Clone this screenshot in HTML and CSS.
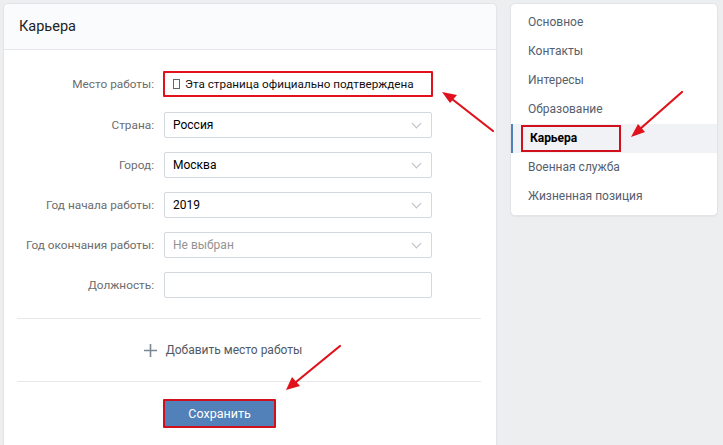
FILE: index.html
```html
<!doctype html>
<html>
  <head>
    <meta charset="utf-8">
    <title>Карьера</title>
    <link rel="stylesheet" href="styles.css">
  </head>
  <body>
    <div id="page">
      <div class="card main">
        <div class="head">Карьера</div>
        <div class="form">
          <div class="row first">
            <div class="label">Место работы:</div>
            <div class="field marked"><span class="tofu"></span>Эта страница официально подтверждена</div>
          </div>
          <div class="row">
            <div class="label">Страна:</div>
            <div class="field select">Россия<span class="chev"></span></div>
          </div>
          <div class="row">
            <div class="label">Город:</div>
            <div class="field select">Москва<span class="chev"></span></div>
          </div>
          <div class="row">
            <div class="label">Год начала работы:</div>
            <div class="field select">2019<span class="chev"></span></div>
          </div>
          <div class="row">
            <div class="label">Год окончания работы:</div>
            <div class="field select empty">Не выбран<span class="chev"></span></div>
          </div>
          <div class="row">
            <div class="label">Должность:</div>
            <div class="field"></div>
          </div>
        </div>
        <div class="add">
          <svg class="plus" width="13" height="13" viewBox="0 0 13 13"><path d="M6.5 0v13M0 6.5h13" stroke="#7c8796" stroke-width="1.6"/></svg>
          Добавить место работы
        </div>
        <div class="foot">
          <div class="save">Сохранить</div>
        </div>
      </div>
      <div class="card menu">
        <div class="item">Основное</div>
        <div class="item">Контакты</div>
        <div class="item">Интересы</div>
        <div class="item">Образование</div>
        <div class="item current"><span class="boxed">Карьера</span></div>
        <div class="item">Военная служба</div>
        <div class="item">Жизненная позиция</div>
      </div>
    </div>
    <svg class="arrows" width="723" height="445" viewBox="0 0 723 445">
      <g stroke="#e0121c" stroke-width="2.2" fill="#e0121c" stroke-linecap="round">
        <line x1="493" y1="131" x2="452" y2="99"/>
        <polygon points="442,92 457,95 450,103" stroke="none"/>
        <line x1="682" y1="92" x2="640" y2="129"/>
        <polygon points="631,137 638,124 645,132" stroke="none"/>
        <line x1="340" y1="346" x2="296" y2="382"/>
        <polygon points="286,390 292,377 300,386" stroke="none"/>
      </g>
    </svg>
  </body>
</html>
```
FILE: styles.css
```css
body {
  margin: 0;
  background-color: #edeef0;
  font-family: Roboto, "Open Sans", sans-serif;
  font-size: 12px;
  color: #000;
}

#page {
  display: flex;
  align-items: flex-start;
  gap: 13px;
  padding: 3px 0 0 3px;
}

.card {
  background-color: #fff;
  border: 1px solid #e3e4e8;
  border-radius: 5px;
  box-shadow: 0 1px 1px rgba(0,0,0,0.04);
}

.main {
  width: 492px;
  height: 460px;
}

.head {
  height: 45px;
  line-height: 45px;
  padding-left: 15px;
  font-size: 14.5px;
  color: #222;
  background-color: #fafbfc;
  border-bottom: 1px solid #e7e8ec;
  border-radius: 5px 5px 0 0;
}

.form {
  display: flex;
  flex-direction: column;
  gap: 14px;
  padding: 21px 0 20px 0;
  margin: 0 15px 0 13px;
  border-bottom: 1px solid #e7e8ec;
}

.row {
  display: flex;
  align-items: center;
  height: 26px;
  white-space: nowrap;
}

.row.first {
  margin-bottom: 1px;
}

.label {
  width: 137px;
  padding-right: 10px;
  text-align: right;
  color: #6d6d6d;
  font-size: 11.8px;
}

.field {
  box-sizing: border-box;
  width: 268px;
  height: 26px;
  line-height: 24px;
  padding: 0 8px;
  border: 1px solid #d3d9de;
  border-radius: 2px;
  position: relative;
}

.field.marked {
  width: 270px;
  margin-left: -1px;
  border: 2px solid #e0121c;
  border-radius: 1px;
  line-height: 22px;
  padding-left: 8px;
  color: #111;
  font-size: 11.7px;
}

.tofu {
  display: inline-block;
  width: 5px;
  height: 8px;
  border: 1px solid #666;
  margin-right: 5px;
  vertical-align: -1px;
}

.empty {
  color: #939393;
}

.chev {
  position: absolute;
  right: 11px;
  top: 7px;
  width: 6px;
  height: 6px;
  border-right: 1px solid #b8bfc7;
  border-bottom: 1px solid #b8bfc7;
  transform: rotate(45deg);
}

.add {
  display: flex;
  justify-content: center;
  align-items: center;
  height: 62px;
  margin: 0 15px 0 13px;
  border-bottom: 1px solid #e7e8ec;
  color: #4f5a66;
  padding-right: 52px;
}

.plus {
  margin-right: 9px;
}

.foot {
  padding: 17px 0 0 159px;
}

.save {
  width: 109px;
  height: 25px;
  line-height: 25px;
  text-align: center;
  color: #fff;
  background-color: #5181b8;
  border: 2px solid #d0101c;
  border-radius: 1px;
  font-size: 12.5px;
}

.menu {
  width: 206px;
  padding: 4px 0;
}

.item {
  height: 29px;
  line-height: 29px;
  padding-left: 17px;
  color: #55606e;
}

.item.current {
  background-color: #f0f2f5;
  border-left: 2px solid #5181b8;
  padding-left: 8px;
  font-weight: bold;
  color: #000;
}

.boxed {
  display: inline-block;
  box-sizing: border-box;
  width: 100px;
  height: 27px;
  line-height: 23px;
  padding-left: 7px;
  border: 2px solid #d0101c;
  vertical-align: top;
  margin-top: 1px;
}

.arrows {
  position: absolute;
  left: 0;
  top: 0;
}
```
